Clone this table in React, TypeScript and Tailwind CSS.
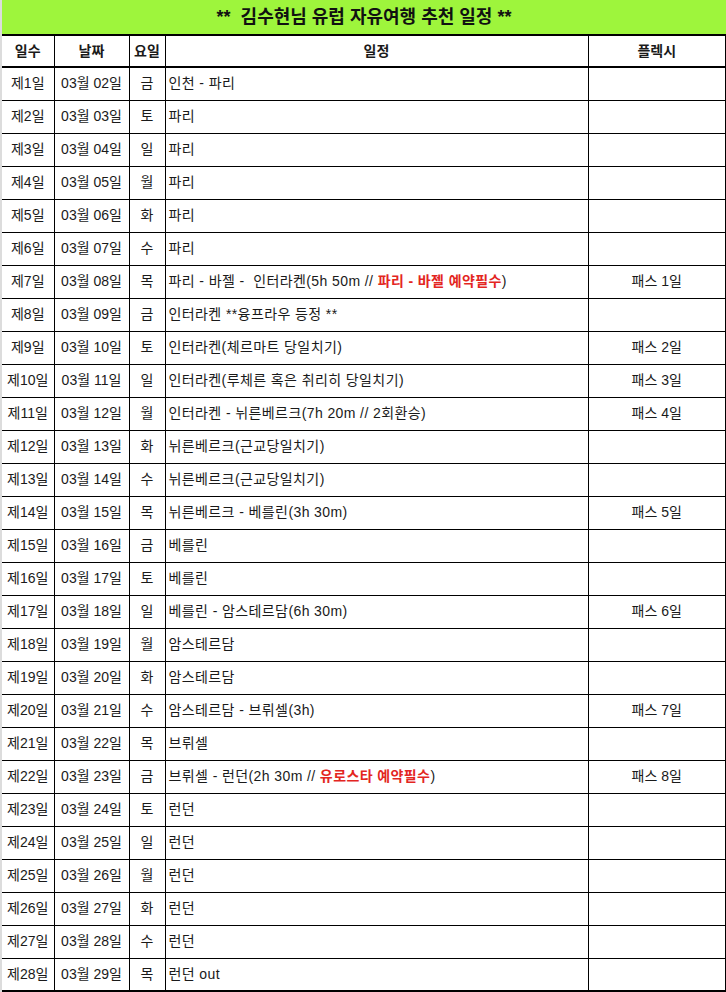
import React from 'react';

type Row = {
  day: string;
  date: string;
  dow: string;
  plan: React.ReactNode;
  pass?: string;
};

const red = (t: string) => <span className="font-bold text-[#e3261f]">{t}</span>;

const rows: Row[] = [
  { day: '제1일', date: '03월 02일', dow: '금', plan: '인천 - 파리' },
  { day: '제2일', date: '03월 03일', dow: '토', plan: '파리' },
  { day: '제3일', date: '03월 04일', dow: '일', plan: '파리' },
  { day: '제4일', date: '03월 05일', dow: '월', plan: '파리' },
  { day: '제5일', date: '03월 06일', dow: '화', plan: '파리' },
  { day: '제6일', date: '03월 07일', dow: '수', plan: '파리' },
  {
    day: '제7일',
    date: '03월 08일',
    dow: '목',
    plan: (
      <>
        {'파리 - 바젤 -  인터라켄(5h 50m // '}
        {red('파리 - 바젤 예약필수')}
        {')'}
      </>
    ),
    pass: '패스 1일',
  },
  { day: '제8일', date: '03월 09일', dow: '금', plan: '인터라켄 **융프라우 등정 **' },
  { day: '제9일', date: '03월 10일', dow: '토', plan: '인터라켄(체르마트 당일치기)', pass: '패스 2일' },
  { day: '제10일', date: '03월 11일', dow: '일', plan: '인터라켄(루체른 혹은 취리히 당일치기)', pass: '패스 3일' },
  { day: '제11일', date: '03월 12일', dow: '월', plan: '인터라켄 - 뉘른베르크(7h 20m // 2회환승)', pass: '패스 4일' },
  { day: '제12일', date: '03월 13일', dow: '화', plan: '뉘른베르크(근교당일치기)' },
  { day: '제13일', date: '03월 14일', dow: '수', plan: '뉘른베르크(근교당일치기)' },
  { day: '제14일', date: '03월 15일', dow: '목', plan: '뉘른베르크 - 베를린(3h 30m)', pass: '패스 5일' },
  { day: '제15일', date: '03월 16일', dow: '금', plan: '베를린' },
  { day: '제16일', date: '03월 17일', dow: '토', plan: '베를린' },
  { day: '제17일', date: '03월 18일', dow: '일', plan: '베를린 - 암스테르담(6h 30m)', pass: '패스 6일' },
  { day: '제18일', date: '03월 19일', dow: '월', plan: '암스테르담' },
  { day: '제19일', date: '03월 20일', dow: '화', plan: '암스테르담' },
  { day: '제20일', date: '03월 21일', dow: '수', plan: '암스테르담 - 브뤼셀(3h)', pass: '패스 7일' },
  { day: '제21일', date: '03월 22일', dow: '목', plan: '브뤼셀' },
  {
    day: '제22일',
    date: '03월 23일',
    dow: '금',
    plan: (
      <>
        {'브뤼셀 - 런던(2h 30m // '}
        {red('유로스타 예약필수')}
        {')'}
      </>
    ),
    pass: '패스 8일',
  },
  { day: '제23일', date: '03월 24일', dow: '토', plan: '런던' },
  { day: '제24일', date: '03월 25일', dow: '일', plan: '런던' },
  { day: '제25일', date: '03월 26일', dow: '월', plan: '런던' },
  { day: '제26일', date: '03월 27일', dow: '화', plan: '런던' },
  { day: '제27일', date: '03월 28일', dow: '수', plan: '런던' },
  { day: '제28일', date: '03월 29일', dow: '목', plan: '런던 out' },
];

const cell = 'border-r border-black p-0 align-middle';

export default function App() {
  return (
    <div className="w-[726px] h-[992px] bg-white text-[14px] text-[#1a1a1a] font-['Liberation_Sans','Noto_Sans_CJK_KR',sans-serif] border-l-2 border-[#dcdcdc]">
      <div className="h-[34px] bg-[#9ef53c] flex items-center justify-center font-bold text-[18px] text-[#111] whitespace-pre">
        {'**  김수현님 유럽 자유여행 추천 일정 **'}
      </div>
      <table className="table-fixed border-collapse w-[724px]">
        <colgroup>
          <col className="w-[52px]" />
          <col className="w-[75px]" />
          <col className="w-[36px]" />
          <col className="w-[423px]" />
          <col className="w-[138px]" />
        </colgroup>
        <thead>
          <tr className="border-t-2 border-b-2 border-black">
            <th className={`${cell} h-[32px] font-bold text-center`}>일수</th>
            <th className={`${cell} h-[32px] font-bold text-center`}>날짜</th>
            <th className={`${cell} h-[32px] font-bold text-center`}>요일</th>
            <th className={`${cell} h-[32px] font-bold text-center`}>일정</th>
            <th className={`${cell} h-[32px] border-r-2 font-bold text-center`}>플렉시</th>
          </tr>
        </thead>
        <tbody>
          {rows.map((r, i) => (
            <tr
              key={r.day}
              className={i === rows.length - 1 ? 'border-b-2 border-black' : 'border-b border-black'}
            >
              <td className={`${cell} h-[33px] text-center`}>{r.day}</td>
              <td className={`${cell} h-[33px] text-center`}>{r.date}</td>
              <td className={`${cell} h-[33px] text-center`}>{r.dow}</td>
              <td className={`${cell} h-[33px] pl-[3px] text-left whitespace-pre tracking-[0.4px]`}>{r.plan}</td>
              <td className={`${cell} h-[33px] border-r-2 text-center`}>{r.pass ?? ''}</td>
            </tr>
          ))}
        </tbody>
      </table>
    </div>
  );
}
